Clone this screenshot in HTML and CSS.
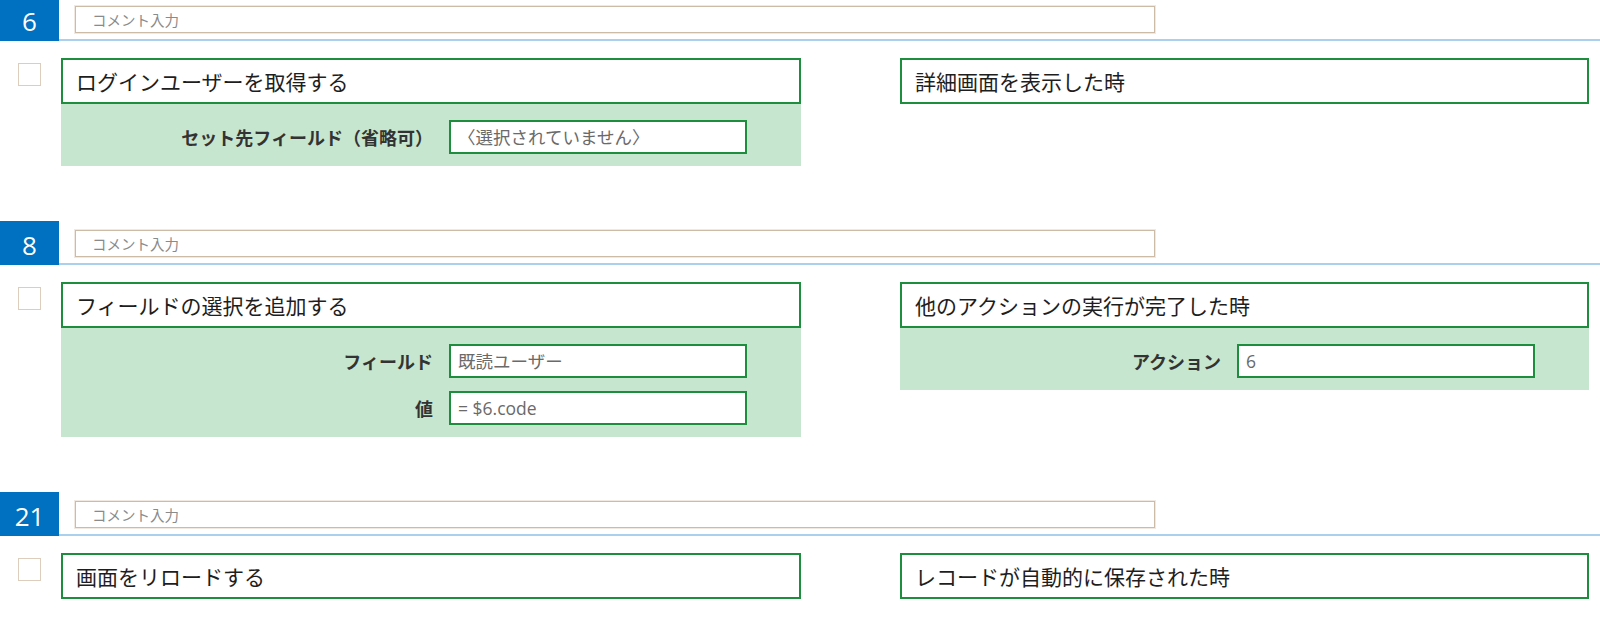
FILE: index.html
```html
<!DOCTYPE html>
<html lang="ja">
<head>
<meta charset="utf-8">
<title>Actions</title>
<link rel="stylesheet" href="styles.css">
</head>
<body>
<div class="page">

  <section class="step">
    <div class="step-head">
      <div class="badge">6</div>
      <div class="head-rest"><div class="comment">コメント入力</div></div>
    </div>
    <div class="step-body">
      <div class="check"></div>
      <div class="col col-action">
        <div class="title-box">ログインユーザーを取得する</div>
        <div class="params">
          <div class="param-row">
            <div class="param-label">セット先フィールド（省略可）</div>
            <div class="param-field">〈選択されていません〉</div>
          </div>
        </div>
      </div>
      <div class="col col-trigger">
        <div class="title-box">詳細画面を表示した時</div>
      </div>
    </div>
  </section>

  <section class="step">
    <div class="step-head">
      <div class="badge">8</div>
      <div class="head-rest"><div class="comment">コメント入力</div></div>
    </div>
    <div class="step-body">
      <div class="check"></div>
      <div class="col col-action">
        <div class="title-box">フィールドの選択を追加する</div>
        <div class="params">
          <div class="param-row">
            <div class="param-label">フィールド</div>
            <div class="param-field">既読ユーザー</div>
          </div>
          <div class="param-row">
            <div class="param-label">値</div>
            <div class="param-field latin">= $6.code</div>
          </div>
        </div>
      </div>
      <div class="col col-trigger">
        <div class="title-box">他のアクションの実行が完了した時</div>
        <div class="params">
          <div class="param-row">
            <div class="param-label">アクション</div>
            <div class="param-field latin">6</div>
          </div>
        </div>
      </div>
    </div>
  </section>

  <section class="step">
    <div class="step-head">
      <div class="badge">21</div>
      <div class="head-rest"><div class="comment">コメント入力</div></div>
    </div>
    <div class="step-body">
      <div class="check"></div>
      <div class="col col-action">
        <div class="title-box">画面をリロードする</div>
      </div>
      <div class="col col-trigger">
        <div class="title-box">レコードが自動的に保存された時</div>
      </div>
    </div>
  </section>

</div>
</body>
</html>
```

FILE: styles.css
```css
* { box-sizing: border-box; }

html, body {
  margin: 0;
  padding: 0;
  background: #ffffff;
  overflow: hidden;
}

body {
  font-family: "Open Sans", "Noto Sans CJK JP", sans-serif;
  color: #222222;
}

.page {
  margin-top: -3px;
  display: flex;
  flex-direction: column;
}

.step {
  display: flex;
  flex-direction: column;
  padding-bottom: 55px;
}

.step-head {
  display: flex;
  height: 44px;
}

.badge {
  width: 59px;
  height: 44px;
  background: #0070c0;
  color: #ffffff;
  font-family: "Open Sans", sans-serif;
  font-size: 26px;
  line-height: 44px;
  padding-top: 2px;
  text-align: center;
}

.head-rest {
  flex: 1;
  border-bottom: 2px solid #a9d1ee;
  padding: 9px 0 0 16px;
}

.comment {
  width: 1080px;
  height: 27px;
  border: 1px solid #cdbba8;
  box-shadow: 0 0 0 1px #f1e9e1;
  font-family: "Noto Sans CJK JP", sans-serif;
  font-size: 14.5px;
  line-height: 25px;
  color: #8a8a8a;
  padding-left: 16px;
}

.step-body {
  display: flex;
  align-items: flex-start;
  padding-top: 17px;
}

.check {
  width: 23px;
  height: 23px;
  margin: 5px 20px 0 18px;
  border: 1.5px solid #dccdbd;
  background: #ffffff;
}

.col {
  display: flex;
  flex-direction: column;
}

.col-action {
  width: 740px;
}

.col-trigger {
  width: 689px;
  margin-left: 99px;
}

.title-box {
  height: 46px;
  border: 2px solid #1e8e3e;
  background: #ffffff;
  font-family: "Noto Sans CJK JP", sans-serif;
  font-size: 21px;
  line-height: 42px;
  padding-left: 13px;
  color: #1e1e1e;
}

.params {
  background: #c6e6cf;
  display: flex;
  flex-direction: column;
  gap: 13px;
  padding: 16px 54px 12px 0;
}

.param-row {
  display: flex;
  align-items: center;
}

.param-label {
  flex: 1;
  text-align: right;
  margin-right: 16px;
  font-family: "Noto Sans CJK JP", sans-serif;
  font-weight: bold;
  font-size: 18px;
  color: #333333;
}

.param-field {
  width: 298px;
  height: 34px;
  border: 2px solid #1e8e3e;
  background: #ffffff;
  font-family: "Noto Sans CJK JP", sans-serif;
  font-size: 17.5px;
  line-height: 30px;
  color: #6a6a6a;
  padding-left: 7px;
  white-space: nowrap;
  overflow: hidden;
}

.param-field.latin {
  font-family: "Open Sans", "Noto Sans CJK JP", sans-serif;
}
```
